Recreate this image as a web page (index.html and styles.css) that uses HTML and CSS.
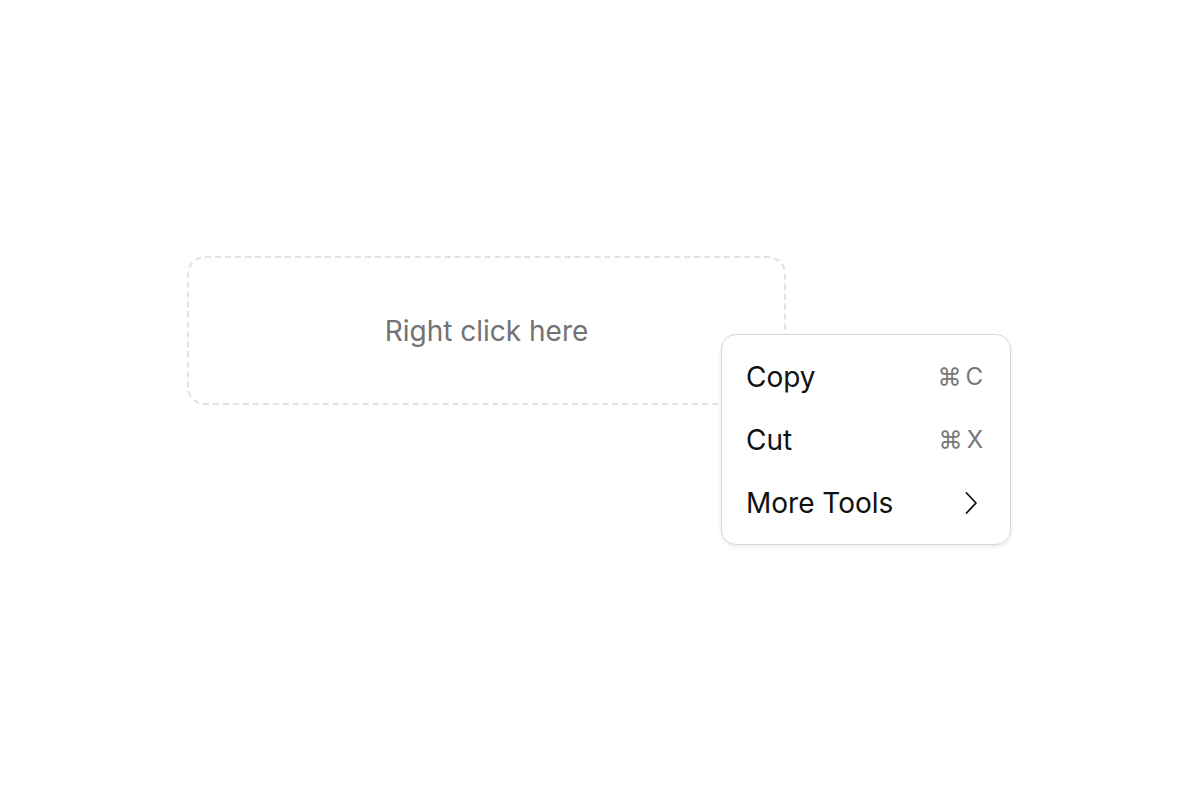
FILE: index.html
```html
<!DOCTYPE html>
<html>
<head>
<meta charset="utf-8">
<link rel="stylesheet" href="styles.css">
</head>
<body>
<div class="stage">
  <div class="area">Right click here</div>
  <div class="menu">
    <div class="item"><span class="label">Copy</span><span class="kbd"><span>⌘</span><span>C</span></span></div>
    <div class="item"><span class="label">Cut</span><span class="kbd"><span>⌘</span><span>X</span></span></div>
    <div class="item"><span class="label">More Tools</span>
      <svg class="chev" width="16" height="24" viewBox="0 0 16 24"><path d="M3.5 2 L13 12 L3.5 22" fill="none" stroke="#111" stroke-width="1.8" stroke-linecap="round" stroke-linejoin="round"/></svg>
    </div>
  </div>
</div>
</body>
</html>
```
FILE: styles.css
```css
html, body {
  margin: 0;
  height: 100%;
  background: #fff;
  font-family: Inter, "Noto Sans", sans-serif;
}
body {
  display: flex;
  align-items: center;
  justify-content: center;
}
.stage {
  position: relative;
  width: 826px;
  height: 290px;
  margin-top: 2px;
  box-sizing: border-box;
}
.area {
  width: 599px;
  height: 149px;
  box-sizing: border-box;
  border: 2px dashed #e2e2e2;
  border-radius: 18px;
  display: flex;
  align-items: center;
  justify-content: center;
  color: #737373;
  font-size: 28px;
}
.menu {
  position: absolute;
  left: 534px;
  top: 78px;
  width: 290px;
  height: 211px;
  box-sizing: border-box;
  padding: 10px 0 9px;
  background: #fff;
  border: 1.5px solid #d8d8d8;
  border-radius: 15px;
  box-shadow: 0 2px 4px rgba(0,0,0,0.08);
  display: flex;
  flex-direction: column;
}
.item {
  height: 64px;
  display: flex;
  align-items: center;
  justify-content: space-between;
  padding: 0 27px 0 24px;
}
.label {
  font-size: 28px;
  color: #111;
}
.kbd {
  font-size: 24px;
  color: #777;
  display: flex;
  gap: 4px;
}
.chev {
  margin-right: 4px;
}
```
